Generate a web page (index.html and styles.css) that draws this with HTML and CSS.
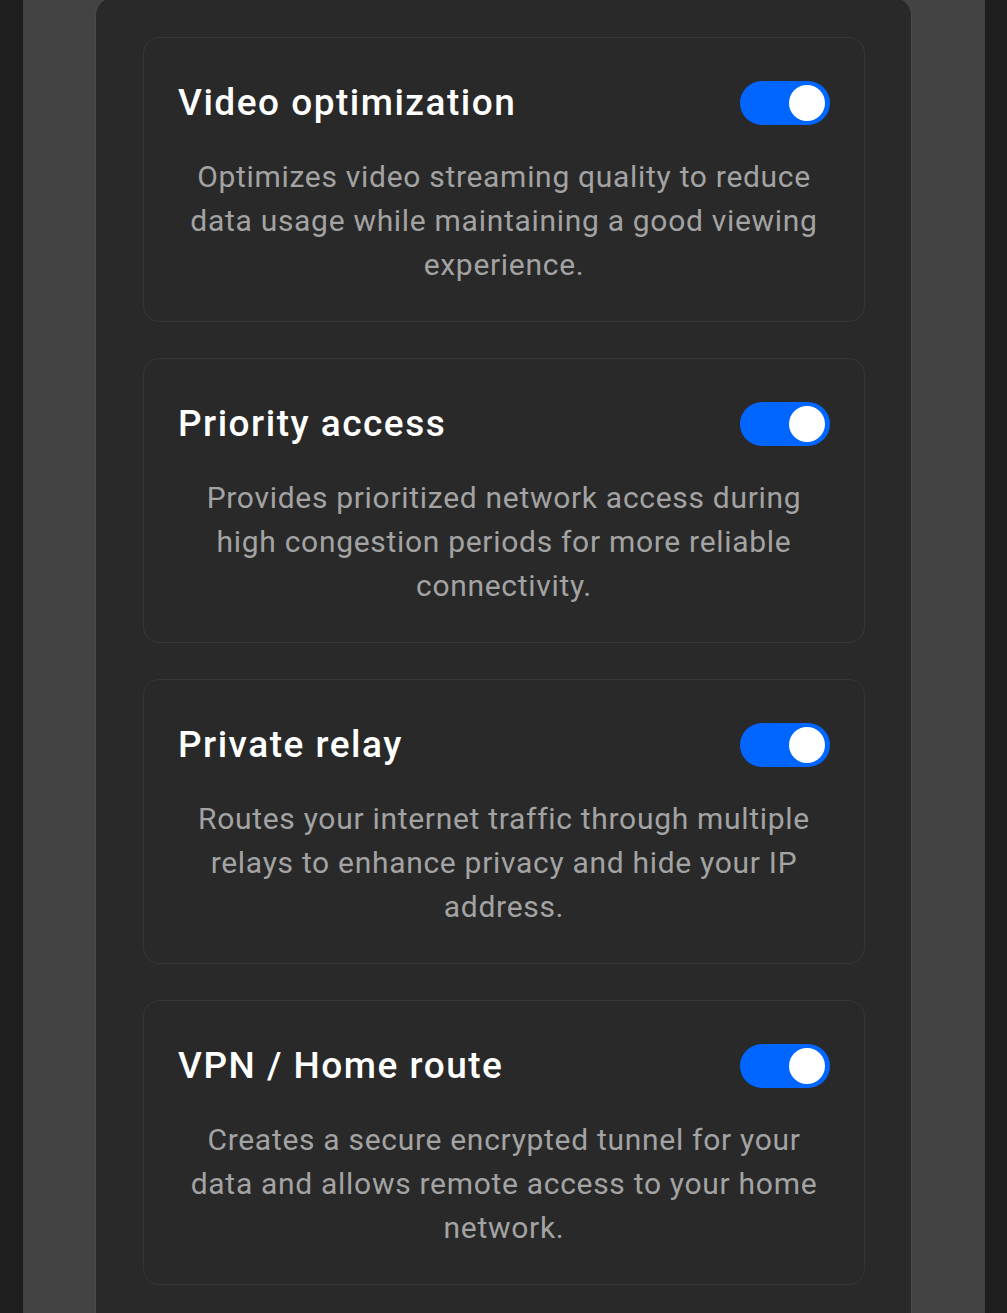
FILE: index.html
```html
<!DOCTYPE html>
<html lang="en">
<head>
<meta charset="utf-8">
<title>Settings</title>
<link rel="stylesheet" href="styles.css">
</head>
<body>
<div class="frame">
  <div class="panel">
    <div class="card">
      <div class="card-head">
        <h2 class="card-title">Video optimization</h2>
        <div class="toggle on" role="switch" aria-checked="true"><span class="knob"></span></div>
      </div>
      <p class="card-desc">Optimizes video streaming quality to reduce data usage while maintaining a good viewing experience.</p>
    </div>
    <div class="card">
      <div class="card-head">
        <h2 class="card-title">Priority access</h2>
        <div class="toggle on" role="switch" aria-checked="true"><span class="knob"></span></div>
      </div>
      <p class="card-desc">Provides prioritized network access during high congestion periods for more reliable connectivity.</p>
    </div>
    <div class="card">
      <div class="card-head">
        <h2 class="card-title">Private relay</h2>
        <div class="toggle on" role="switch" aria-checked="true"><span class="knob"></span></div>
      </div>
      <p class="card-desc">Routes your internet traffic through multiple relays to enhance privacy and hide your IP address.</p>
    </div>
    <div class="card">
      <div class="card-head">
        <h2 class="card-title">VPN / Home route</h2>
        <div class="toggle on" role="switch" aria-checked="true"><span class="knob"></span></div>
      </div>
      <p class="card-desc">Creates a secure encrypted tunnel for your data and allows remote access to your home network.</p>
    </div>
  </div>
</div>
</body>
</html>
```
FILE: styles.css
```css
html, body {
  margin: 0;
  padding: 0;
  background: #1e1e1e;
  height: 100%;
  overflow: hidden;
}
body {
  font-family: Roboto, "Noto Sans", sans-serif;
}
.frame {
  margin: 0 22px 0 23px;
  background: #434343;
  padding: 0 73px 0 72px;
  min-height: 1313px;
  display: flex;
  flex-direction: column;
}
.panel {
  margin-top: -3px;
  background: #292929;
  border: 1px solid #4a4a4a;
  border-bottom: none;
  border-radius: 18px 18px 0 0;
  padding: 39px 46px 40px 47px;
  display: flex;
  flex-direction: column;
  gap: 36px;
  flex: 1;
}
.card {
  border: 1px solid #363636;
  border-radius: 16px;
  padding: 43px 34px 34px;
  background: #292929;
}
.card-head {
  display: flex;
  align-items: center;
  justify-content: space-between;
  height: 44px;
}
.card-title {
  margin: 0;
  font-size: 37px;
  font-weight: 500;
  line-height: 44px;
  letter-spacing: 1.5px;
  color: #ffffff;
}
.toggle {
  width: 90px;
  height: 44px;
  border-radius: 22px;
  background: #0066ff;
  position: relative;
  flex: none;
}
.knob {
  position: absolute;
  top: 4px;
  right: 5px;
  width: 36px;
  height: 36px;
  border-radius: 50%;
  background: #ffffff;
}
.card-desc {
  margin: 30px 0 0;
  font-size: 30px;
  line-height: 44px;
  letter-spacing: 0.7px;
  color: #a3a3a3;
  text-align: center;
}
```
